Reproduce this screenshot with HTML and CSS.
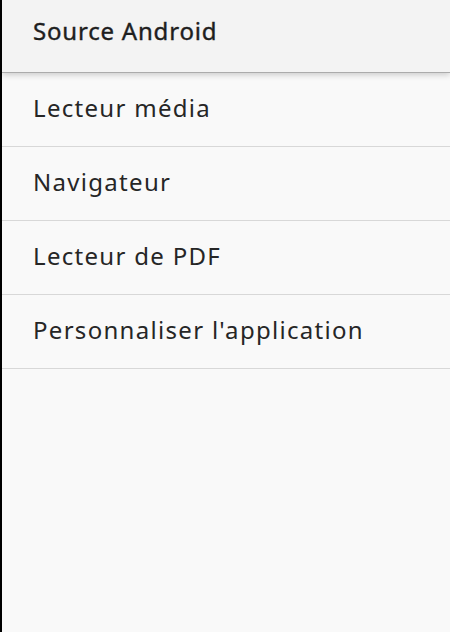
FILE: index.html
```html
<!DOCTYPE html>
<html lang="fr">
<head>
    <meta charset="UTF-8" />
    <meta name="viewport" content="width=device-width, initial-scale=1.0"/>
    <title>Source Android</title>
    <link rel="stylesheet" href="styles.css">
</head>
<body>
    <div class="panel">
        <!-- ===== EN-TETE ===== -->
        <div class="panel-header">Source Android</div>

        <!-- ===== LISTE ===== -->
        <ul class="source-list">
            <li class="source-item">Lecteur média</li>
            <li class="source-item">Navigateur</li>
            <li class="source-item">Lecteur de PDF</li>
            <li class="source-item">Personnaliser l'application</li>
        </ul>
    </div>
</body>
</html>
```

FILE: styles.css
```css
html,body{height:100%;}
body{
    margin:0;background:#000;
    font-family:"Noto Sans","Open Sans",sans-serif;color:#222;
}
.panel{
    height:100%;margin-left:2px;background:#f9f9f9;
    display:flex;flex-direction:column;
}
.panel-header{
    height:73px;box-sizing:border-box;
    padding:15px 0 0 31px;
    background:#f3f3f3;font-size:24px;line-height:32px;
    letter-spacing:.8px;color:#1e1e1e;
    -webkit-text-stroke:.4px #1e1e1e;
    border-bottom:1px solid #ababab;
    box-shadow:0 2px 6px rgba(0,0,0,.18);
    position:relative;z-index:1;
}
.source-list{list-style:none;margin:0;padding:0;}
.source-item{
    height:74px;box-sizing:border-box;
    padding:19px 0 0 31px;
    font-size:24px;line-height:32px;letter-spacing:1.3px;color:#262626;
    border-bottom:1px solid #d8d8d8;
}
```
